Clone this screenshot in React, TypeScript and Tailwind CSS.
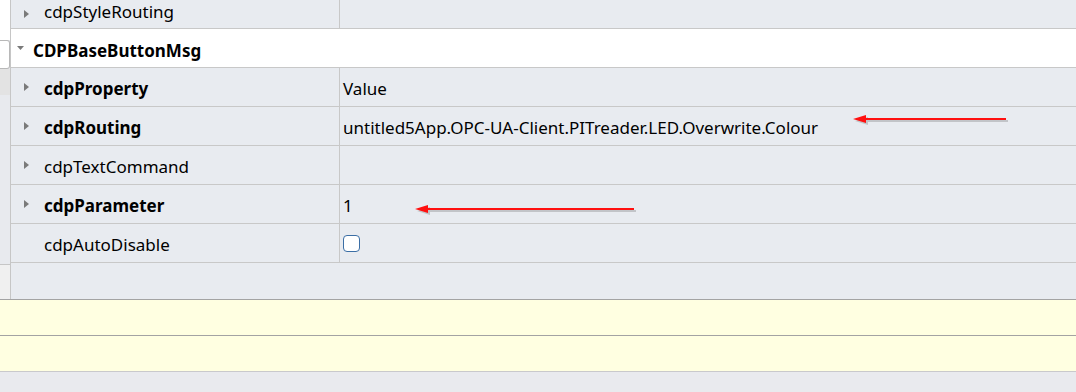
import React from "react";

const font = { fontFamily: '"Noto Sans", "Open Sans", sans-serif' };

type Row = { name: string; bold?: boolean; value?: React.ReactNode; expandable?: boolean };

const rows: Row[] = [
  { name: "cdpProperty", bold: true, value: "Value", expandable: true },
  { name: "cdpRouting", bold: true, value: "untitled5App.OPC-UA-Client.PITreader.LED.Overwrite.Colour", expandable: true },
  { name: "cdpTextCommand", expandable: true },
  { name: "cdpParameter", bold: true, value: "1", expandable: true },
  {
    name: "cdpAutoDisable",
    value: <span className="block h-[17px] w-[17px] rounded-[4px] border border-[#3b6ea5] bg-white" />,
  },
];

function RightTri() {
  return (
    <svg width="5" height="8" viewBox="0 0 5 8" className="shrink-0">
      <path d="M0 0 L5 4 L0 8 Z" fill="#7a7a7a" />
    </svg>
  );
}

function Arrow({ x1, x2, y }: { x1: number; x2: number; y: number }) {
  return (
    <svg className="pointer-events-none absolute left-0 top-0" width="1076" height="392">
      <g transform="translate(2 2)" opacity="0.25">
        <line x1={x1 + 10} y1={y} x2={x2} y2={y} stroke="#555" strokeWidth="2" />
        <path d={`M${x1} ${y} L${x1 + 13} ${y - 4} L${x1 + 13} ${y + 4} Z`} fill="#555" />
      </g>
      <line x1={x1 + 10} y1={y} x2={x2} y2={y} stroke="#ff1010" strokeWidth="2" />
      <path d={`M${x1} ${y} L${x1 + 13} ${y - 4} L${x1 + 13} ${y + 4} Z`} fill="#ff1010" />
    </svg>
  );
}

export default function App() {
  return (
    <div className="relative flex h-[392px] w-[1076px] flex-col overflow-hidden bg-[#e9eaee] text-[17px] text-black" style={font}>
      <div className="flex h-[299px]">
        {/* left strip */}
        <div className="flex w-[11px] flex-col border-r border-[#c6c6c6]">
          <div className="h-[40px] bg-white" />
          <div className="h-[29px] rounded-r-[3px] border border-l-0 border-[#b8b8b8] bg-white" />
          <div className="h-[26px] bg-[#e3e3e3]" />
          <div className="h-[169px] bg-[#e8eaee]" />
          <div className="flex-1 border-t border-[#c6c6c6] bg-[#f0f0f0]" />
        </div>

        {/* property grid */}
        <div className="flex flex-1 flex-col bg-[#e8ebf0]">
          <div className="flex h-[29px] border-b border-[#c8c8c8]">
            <div className="flex w-[329px] items-center gap-[15px] border-r border-[#c8c8c8] pl-[13px]">
              <RightTri />
              <span className="-mt-[4px]">cdpStyleRouting</span>
            </div>
          </div>

          <div className="flex h-[39px] items-center gap-[9px] border-b border-[#c8c8c8] bg-white pl-[6px]">
            <svg width="7" height="4" viewBox="0 0 7 4">
              <path d="M0 0 L7 0 L3.5 4 Z" fill="#7a7a7a" />
            </svg>
            <span className="mt-[5px] font-bold">CDPBaseButtonMsg</span>
          </div>

          {rows.map((r) => (
            <div key={r.name} className="flex h-[39px] border-b border-[#c8c8c8]">
              <div className="flex w-[329px] items-center gap-[15px] border-r border-[#c8c8c8] pl-[13px]">
                {r.expandable ? <RightTri /> : <span className="w-[5px]" />}
                <span className={r.bold ? "mt-[3px] font-bold" : "mt-[3px]"}>{r.name}</span>
              </div>
              <div className="flex flex-1 items-center pl-[3px]">
                {typeof r.value === "string" ? <span className="mt-[3px]">{r.value}</span> : r.value}
              </div>
            </div>
          ))}

          <div className="flex-1" />
        </div>
      </div>

      <div className="h-[36px] border-t border-[#a3a3a3] bg-[#ffffe1]" />
      <div className="h-[36px] border-t border-[#a3a3a3] bg-[#ffffe1]" />
      <div className="flex-1 border-t border-[#c9c9cc] bg-[#e9eaee]" />

      <Arrow x1={853} x2={1006} y={119} />
      <Arrow x1={415} x2={634} y={209} />
    </div>
  );
}
